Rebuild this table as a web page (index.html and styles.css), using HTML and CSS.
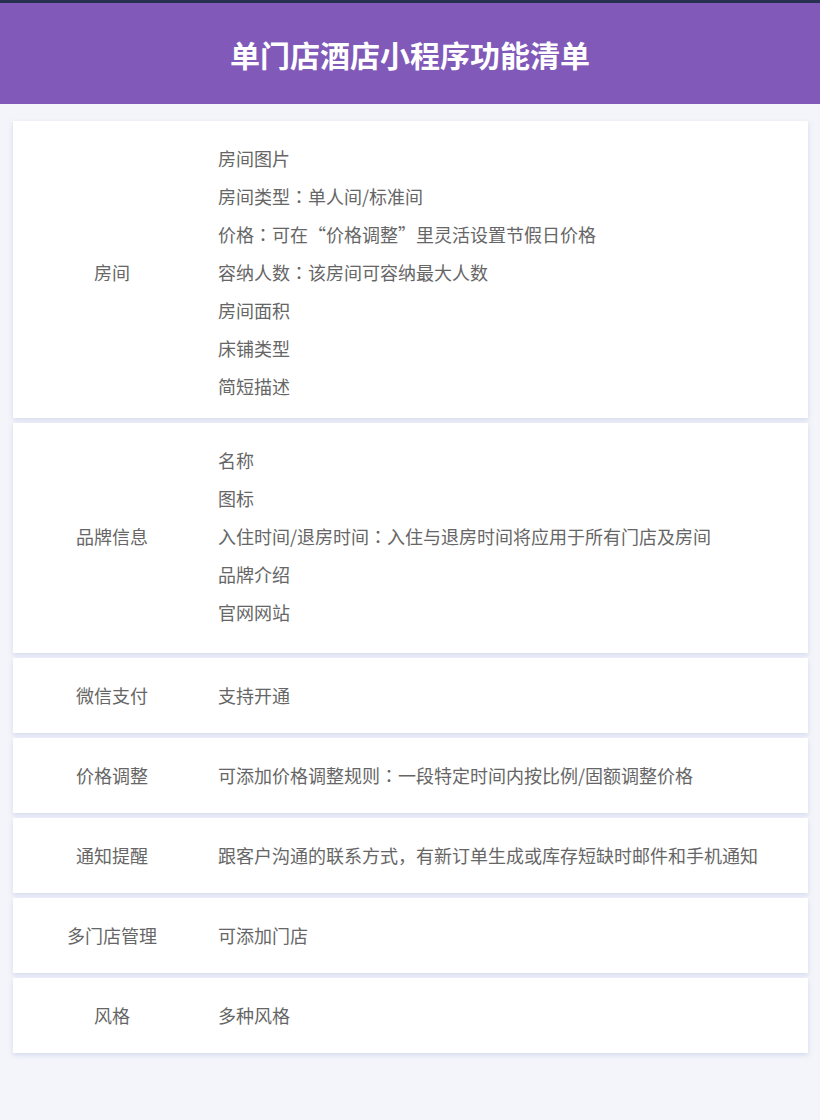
FILE: index.html
```html
<html>
  <head>
    <meta charset="utf-8">
    <title>单门店酒店小程序功能清单</title>
    <link rel="stylesheet" href="styles.css">
  </head>
  <body>
    <div class="topLine"></div>
    <div class="header">
      <h1>单门店酒店小程序功能清单</h1>
    </div>
    <div class="list">
      <div class="card roomCard">
        <div class="label">房间</div>
        <div class="content">
          <p>房间图片</p>
          <p>房间类型<span class="colon">：</span>单人间/标准间</p>
          <p>价格<span class="colon">：</span>可在“价格调整”里灵活设置节假日价格</p>
          <p>容纳人数<span class="colon">：</span>该房间可容纳最大人数</p>
          <p>房间面积</p>
          <p>床铺类型</p>
          <p>简短描述</p>
        </div>
      </div>
      <div class="card brandCard">
        <div class="label">品牌信息</div>
        <div class="content">
          <p>名称</p>
          <p>图标</p>
          <p>入住时间/退房时间<span class="colon">：</span>入住与退房时间将应用于所有门店及房间</p>
          <p>品牌介绍</p>
          <p>官网网站</p>
        </div>
      </div>
      <div class="card">
        <div class="label">微信支付</div>
        <div class="content"><p>支持开通</p></div>
      </div>
      <div class="card">
        <div class="label">价格调整</div>
        <div class="content"><p>可添加价格调整规则<span class="colon">：</span>一段特定时间内按比例/固额调整价格</p></div>
      </div>
      <div class="card">
        <div class="label">通知提醒</div>
        <div class="content"><p>跟客户沟通的联系方式，有新订单生成或库存短缺时邮件和手机通知</p></div>
      </div>
      <div class="card">
        <div class="label">多门店管理</div>
        <div class="content"><p>可添加门店</p></div>
      </div>
      <div class="card">
        <div class="label">风格</div>
        <div class="content"><p>多种风格</p></div>
      </div>
    </div>
  </body>
</html>
```
FILE: styles.css
```css
body {
  margin: 0;
  background-color: #f4f5fa;
  font-family: "Noto Sans CJK SC", "Noto Sans", sans-serif;
  color: #666;
}

.topLine {
  height: 3px;
  background-color: #283052;
}

.header {
  height: 101px;
  background-color: #8059b9;
  display: flex;
  align-items: center;
  justify-content: center;
}

.header h1 {
  margin: 0;
  color: #fff;
  font-size: 30px;
  font-weight: bold;
}

.list {
  padding: 17px 12px 0 13px;
  display: flex;
  flex-direction: column;
  gap: 5px;
}

.card {
  background-color: #fff;
  display: grid;
  grid-template-columns: 198px 1fr;
  align-items: center;
  padding: 18px 0 19px;
  box-shadow: 0 2px 5px rgba(170, 185, 225, 0.45);
}

.roomCard {
  padding-bottom: 13px;
}

.brandCard {
  padding-bottom: 22px;
}

.label {
  text-align: center;
  font-size: 18px;
}

.content {
  padding-left: 7px;
}

.content p {
  margin: 0;
  font-size: 18px;
  line-height: 38px;
}

.colon {
  font-family: "Noto Sans CJK JP", sans-serif;
}
```
